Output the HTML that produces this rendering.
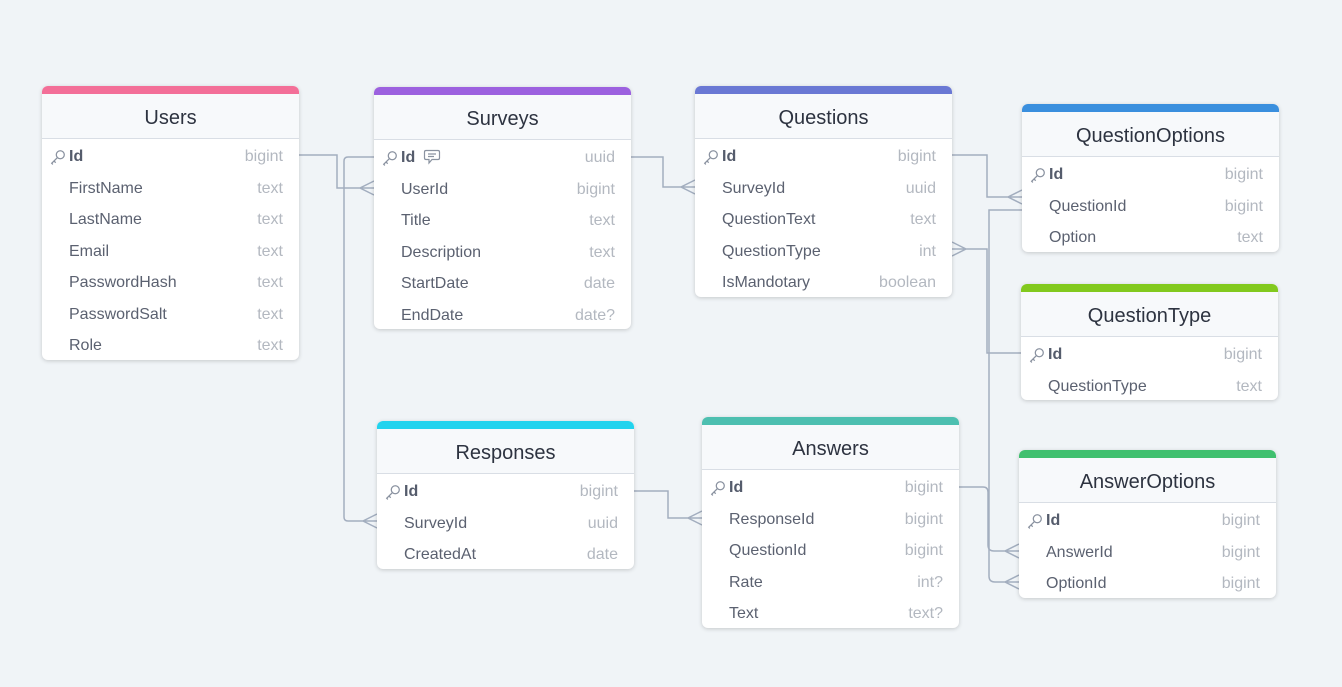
<!DOCTYPE html>
<html><head><meta charset="utf-8"><style>
body{margin:0;width:1342px;height:687px;background:#f0f4f7;position:relative;overflow:hidden;font-family:"Liberation Sans",sans-serif}
.t{position:absolute;width:257px;background:#fff;border-radius:6px;box-shadow:0 1px 4px rgba(0,0,0,.18);overflow:hidden}
.bar{height:8px}
.h{height:44px;background:#f7f9fb;border-bottom:1px solid #d9dee5;text-align:center;line-height:48px;font-size:20px;color:#2d3340}
.r{height:31.5px;line-height:35px;position:relative;font-size:16px;color:#5b6170;padding-left:27px}
.r span{position:absolute;right:16px;color:#b3b8c0}
.r b{color:#555c6c}
.k{position:absolute;left:8px;top:10px}
svg.l{position:absolute;left:0;top:0}
</style></head><body>
<svg class="l" width="1342" height="687" fill="none" stroke="#a3aebf" stroke-width="1.5">
<path d="M299 155H337V188H374M374 181L360 188L374 195"/>
<path d="M374 157H348Q344 157 344 161V517Q344 521 348 521H377M377 514L363 521L377 528"/>
<path d="M631 157H663V187H695M695 180L681 187L695 194"/>
<path d="M952 155H987V197H1022M1022 190L1008 197L1022 204"/>
<path d="M1022 210H989V576Q989 582 995 582H1019M1019 575L1005 582L1019 589"/>
<path d="M952 249H987V353H1021M952 242L966 249L952 256"/>
<path d="M959 487H983Q988 487 988 492V545Q988 551 994 551H1019M1019 544L1005 551L1019 558"/>
<path d="M634 491H668V518H702M702 511L688 518L702 525"/>
</svg>
<div id="tables"></div>
<script>
const key='<svg class="k" width="16" height="16" viewBox="0 0 14 14" fill="none" stroke="#8a92a0" stroke-width="1.1"><circle cx="9" cy="5" r="3.5"/><path d="M6.5 7.5L1.5 12.5L2.5 13.5M3.5 10.5L5 12"/></svg>';
const T=[
["Users",42,86,"#f36f98",[["Id","bigint"],["FirstName","text"],["LastName","text"],["Email","text"],["PasswordHash","text"],["PasswordSalt","text"],["Role","text"]]],
["Surveys",374,87,"#9c61df",[["Id","uuid",1],["UserId","bigint"],["Title","text"],["Description","text"],["StartDate","date"],["EndDate","date?"]]],
["Questions",695,86,"#6a78d4",[["Id","bigint"],["SurveyId","uuid"],["QuestionText","text"],["QuestionType","int"],["IsMandotary","boolean"]]],
["QuestionOptions",1022,104,"#3a8fde",[["Id","bigint"],["QuestionId","bigint"],["Option","text"]]],
["QuestionType",1021,284,"#82c91e",[["Id","bigint"],["QuestionType","text"]]],
["Responses",377,421,"#22d3ee",[["Id","bigint"],["SurveyId","uuid"],["CreatedAt","date"]]],
["Answers",702,417,"#4dbfb0",[["Id","bigint"],["ResponseId","bigint"],["QuestionId","bigint"],["Rate","int?"],["Text","text?"]]],
["AnswerOptions",1019,450,"#40c06f",[["Id","bigint"],["AnswerId","bigint"],["OptionId","bigint"]]]];
let h='';
for(const [n,x,y,c,rows] of T){
h+=`<div class="t" style="left:${x}px;top:${y}px"><div class="bar" style="background:${c}"></div><div class="h">${n}</div>`;
rows.forEach((r,i)=>{
 if(i==0) h+=`<div class="r">${key}<b>${r[0]}</b>${r[2]?' <svg width="18" height="16" viewBox="0 0 18 16" style="vertical-align:-3px;margin-left:3px" fill="none" stroke="#8a92a0" stroke-width="1.2"><path d="M3 1.5H15Q16.5 1.5 16.5 3V9Q16.5 10.5 15 10.5H9L6 14V10.5H3Q1.5 10.5 1.5 9V3Q1.5 1.5 3 1.5ZM5 5H13M5 7.5H11"/></svg>':''}<span>${r[1]}</span></div>`;
 else h+=`<div class="r">${r[0]}<span>${r[1]}</span></div>`;
});
h+='</div>';}
document.getElementById('tables').innerHTML=h;
</script>
</body></html>
